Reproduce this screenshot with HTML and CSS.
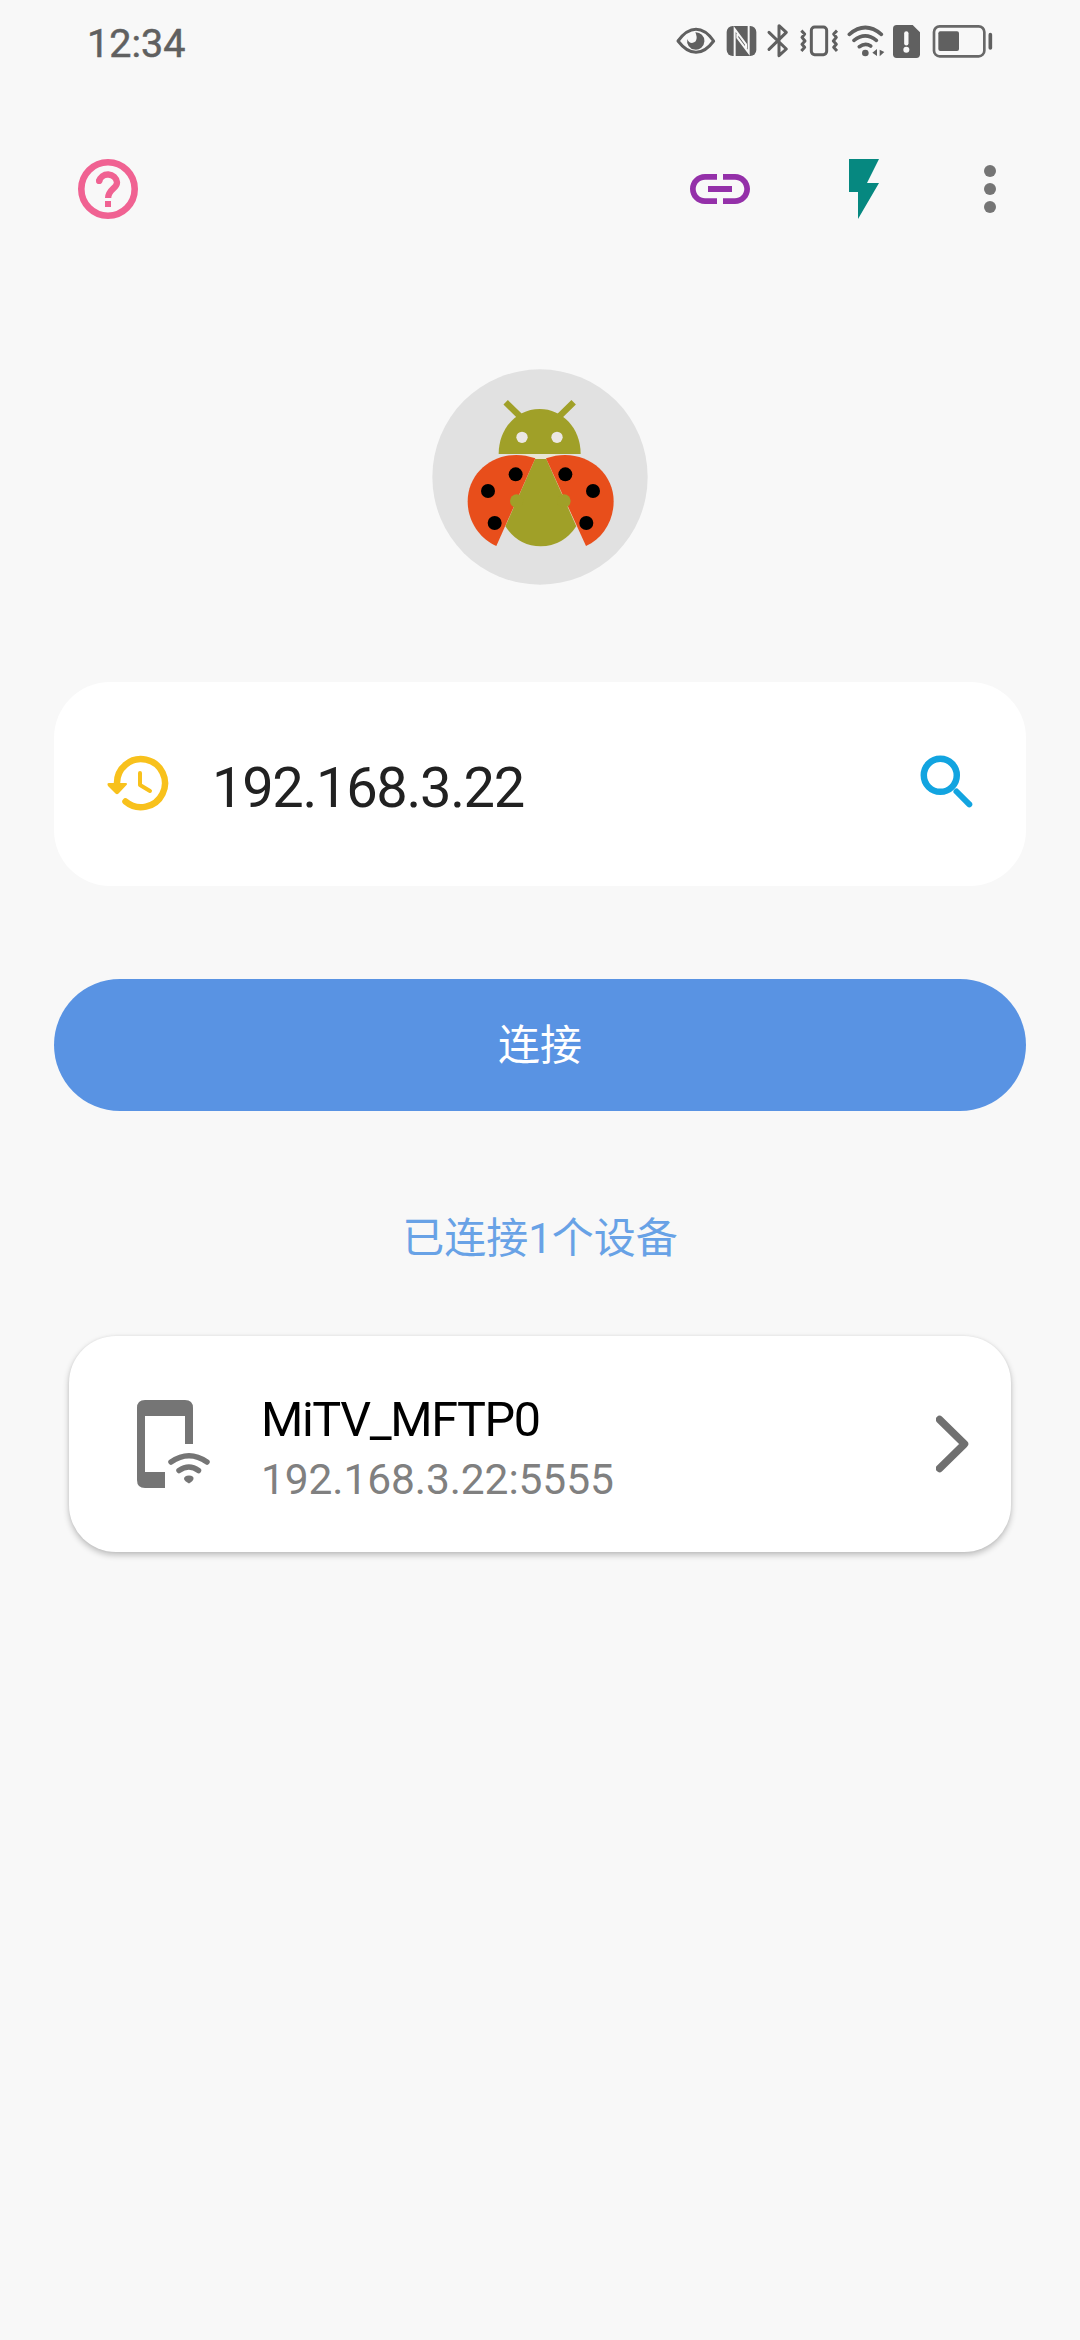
FILE: index.html
```html
<!DOCTYPE html>
<html lang="zh-CN">
<head>
<meta charset="utf-8">
<title>连接</title>
<link rel="stylesheet" href="styles.css">
</head>
<body>
<header class="status">
  <span class="clock">12:34</span>
  <div class="status-icons">
    <svg width="45" height="36" viewBox="48 36 135 108"><path d="M54 90Q80 55 108 55T161 90Q136 124 108 124T54 90Z" fill="none" stroke="#606060" stroke-width="9" stroke-linejoin="round"/><path d="M106 64A26 26 0 1 1 82 84Q86 96 96 96Q111 94 110 78Q109 70 106 64Z" fill="#606060"/></svg>
    <svg width="41" height="36" viewBox="183 36 123 108"><rect x="200" y="45" width="89" height="90" rx="18" fill="#606060"/><path d="M224 135V54L258 100V112M266 45V125L232 80V68" fill="none" stroke="#f8f8f8" stroke-width="6"/></svg>
    <svg width="33" height="36" viewBox="306 36 99 108"><path d="M327 64L379 114L357 134V44L379 64L327 115" fill="none" stroke="#606060" stroke-width="9" stroke-linecap="round" stroke-linejoin="round"/></svg>
    <svg width="48" height="36" viewBox="405 36 144 108"><g fill="none" stroke="#606060" stroke-width="9" stroke-linejoin="round"><rect x="454" y="48" width="46" height="83" rx="10"/><path d="M424 59L434 69L426 79L435 90L426 100L434 109L424 120M531 59L521 69L529 79L520 90L529 100L521 109L531 120"/></g></svg>
    <svg width="46" height="36" viewBox="549 36 138 108"><g fill="none" stroke="#606060" stroke-width="11" stroke-linecap="round"><path d="M568 70Q616 29 664 70M582 88Q616 61 649 88M598 107Q616 94 632 105"/></g><circle cx="616" cy="126" r="10" fill="#606060"/><path d="M651 114V135L637 125ZM659 116V136L673 123Z" fill="#606060"/></svg>
    <svg width="38" height="36" viewBox="687 36 114 108"><path d="M710 42H758L780 64V130Q780 141 769 141H710Q699 141 699 130V53Q699 42 710 42Z" fill="#606060"/><path d="M739 67V97" stroke="#f8f8f8" stroke-width="13" stroke-linecap="round"/><circle cx="739" cy="116" r="9" fill="#f8f8f8"/></svg>
    <svg width="66" height="36" viewBox="801 36 198 108"><rect x="822" y="46" width="151" height="90" rx="17" fill="none" stroke="#686868" stroke-width="8"/><rect x="835" y="61" width="62" height="59" rx="6" fill="#606060"/><path d="M991 71V111" stroke="#606060" stroke-width="11" stroke-linecap="round"/></svg>
  </div>
</header>

<nav class="toolbar">
  <svg class="tool" viewBox="0 0 24 24" fill="#f06292"><circle cx="12" cy="12" r="8.900" fill="none" stroke="#f06292" stroke-width="2.200"/><path d="M11 16h2v2h-2z"/><path d="M9 9.500a3.050 3 0 0 1 6 .3c0 2-2.950 2.300-2.950 5.200" fill="none" stroke="#f06292" stroke-width="2.100"/><circle cx="9.050" cy="9.300" r="1.050"/></svg>
  <div class="actions">
    <svg class="tool" viewBox="0 0 24 24" fill="#9430a9"><path d="M3.900 12c0-1.710 1.390-3.100 3.100-3.100h4V7H7c-2.760 0-5 2.240-5 5s2.240 5 5 5h4v-1.900H7c-1.710 0-3.100-1.390-3.100-3.100zM8 13h8v-2H8v2zm9-6h-4v1.900h4c1.710 0 3.100 1.390 3.100 3.100s-1.390 3.100-3.100 3.100h-4V17h4c2.760 0 5-2.240 5-5s-2.240-5-5-5z"/></svg>
    <svg class="tool" viewBox="0 0 24 24" fill="#068880"><path d="M7 2v11h3v9l7-12h-4l4-8z"/></svg>
    <svg class="more" viewBox="6 0 12 24" fill="#757575"><circle cx="12" cy="6" r="2"/><circle cx="12" cy="12" r="2"/><circle cx="12" cy="18" r="2"/></svg>
  </div>
</nav>

<main class="content">
  <svg class="logo" viewBox="37 27 648 648">
    <circle cx="361" cy="351" r="323" fill="#e1e1e1"/>
    <path d="M300 283H420L470 500H255Z" fill="#e9e5d3"/>
    <path d="M258 127L300 168M462 127L420 168" stroke="#a0a028" stroke-width="19"/>
    <path d="M237 282C237 204 292 147 360 147S483 204 483 282Z" fill="#a0a028"/>
    <circle cx="307" cy="232" r="17" fill="#ebe7e4"/><circle cx="412" cy="232" r="17" fill="#ebe7e4"/>
    <path d="M346 297H380L470 499Q430 559 363 559T257 499Z" fill="#a0a028"/>
    <path d="M347 295C245 258 144 326 144 424C144 484 180 536 230 558Z" fill="#e84e1b"/>
    <path d="M379 295C481 258 582 326 582 424C582 484 548 536 499 558Z" fill="#e84e1b"/>
    <circle cx="291" cy="423" r="20" fill="#a0a028"/><circle cx="433" cy="423" r="20" fill="#a0a028"/>
    <g><circle cx="288" cy="343" r="21"/><circle cx="205" cy="393" r="21"/><circle cx="225" cy="489" r="21"/><circle cx="437" cy="343" r="21"/><circle cx="520" cy="393" r="21"/><circle cx="500" cy="489" r="21"/></g>
  </svg>

  <section class="address">
    <svg width="72" height="72" viewBox="105 748 72 72"><g fill="none" stroke="#f8c11c" stroke-width="6.500" stroke-linecap="round" stroke-linejoin="round"><path d="M117 784A24 24 0 1 1 125.500 801.500"/><path d="M140 773V785L150 791" stroke-width="4"/></g><path d="M109 783H125.500Q128 783 126.500 785L118.500 793.500Q117 795 115.500 793.500L108 786Q106.500 783 109 783Z" fill="#f8c11c"/></svg>
    <span class="ip">192.168.3.22</span>
    <svg width="72" height="72" viewBox="912 748 72 72" fill="none" stroke="#12a4e0"><circle cx="940.300" cy="775.300" r="16.500" stroke-width="6.500"/><path d="M956.500 791.500L969.300 804.300" stroke-width="6" stroke-linecap="round"/></svg>
  </section>

  <button class="connect">连接</button>
  <p class="count">已连接1个设备</p>

  <section class="device">
    <svg width="78" height="90" viewBox="135 1399 78 90"><path d="M145 1400H185Q193 1400 193 1408V1444H185V1416H145V1472H165V1488H145Q137 1488 137 1480V1408Q137 1400 145 1400Z" fill="#757575"/><g fill="none" stroke="#757575" stroke-width="5.500" stroke-linecap="round"><path d="M171 1462Q189 1449.500 207 1462M179 1470.500Q189 1463.500 198.500 1470.500"/></g><path d="M184 1479Q184 1475.500 189 1475.500T193.500 1479Q193 1481 189 1483.500Q184.500 1481 184 1479Z" fill="#757575"/></svg>
    <div class="info">
      <span class="name">MiTV_MFTP0</span>
      <span class="host">192.168.3.22:5555</span>
    </div>
    <svg width="34" height="60" viewBox="936 1414 34 60"><path d="M939.500 1419.500L964.500 1444L939.500 1468.500" fill="none" stroke="#707070" stroke-width="7.500" stroke-linecap="round" stroke-linejoin="round"/></svg>
  </section>
</main>
</body>
</html>
```
FILE: styles.css
```css
* { box-sizing: border-box; }
body {
  margin: 0;
  min-height: 2340px;
  background: #f8f8f8;
  font-family: Roboto, "Noto Sans CJK SC", sans-serif;
}
svg { display: block; flex: none; }
.status {
  height: 80px;
  padding: 0 87px 0 87px;
  display: flex;
  justify-content: space-between;
  align-items: center;
}
.clock {
  font-size: 39.5px;
  line-height: 46px;
  margin-top: 7px;
  color: #606060;
  -webkit-text-stroke: .5px #606060;
}
.status-icons { display: flex; margin-top: 1px; }
.toolbar {
  height: 218px;
  padding: 0 72px;
  display: flex;
  justify-content: space-between;
  align-items: center;
}
.tool { width: 72px; height: 72px; }
.actions { display: flex; gap: 72px; }
.more { width: 36px; height: 72px; }
.content { padding: 71px 54px 0; display: flex; flex-direction: column; }
.logo { width: 216px; height: 216px; align-self: center; }
.address {
  height: 204px;
  margin-top: 97px;
  padding: 0 42px 0 51px;
  display: flex;
  align-items: center;
  background: #fff;
  border-radius: 56px;
}
.ip {
  flex: 1;
  margin: 8px 0 0 35px;
  font-size: 56px;
  line-height: 66px;
  letter-spacing: -1.3px;
  color: #212121;
}
.connect {
  height: 132px;
  margin: 93px 0 0;
  padding: 2px 0 0;
  border: 0;
  border-radius: 66px;
  background: #5993e3;
  color: #fff;
  font: 42px/60px Roboto, "Noto Sans CJK SC", sans-serif;
}
.count {
  margin: 98px 0 0;
  text-align: center;
  font-size: 42px;
  line-height: 60px;
  color: #68a2e6;
}
.device {
  height: 216px;
  margin: 67px 15px 0;
  padding: 0 41px 0 66px;
  display: flex;
  align-items: center;
  background: #fff;
  border-radius: 47px;
  box-shadow: 0 3px 6px rgba(0, 0, 0, .24), 0 0 3px rgba(0, 0, 0, .06);
}
.info { flex: 1; display: flex; flex-direction: column; margin: 12px 0 0 48px; }
.name { font-size: 48.500px; line-height: 60px; letter-spacing: -1.400px; color: #000; }
.host { font-size: 42.500px; line-height: 60px; letter-spacing: -.1px; color: #808080; }
```
